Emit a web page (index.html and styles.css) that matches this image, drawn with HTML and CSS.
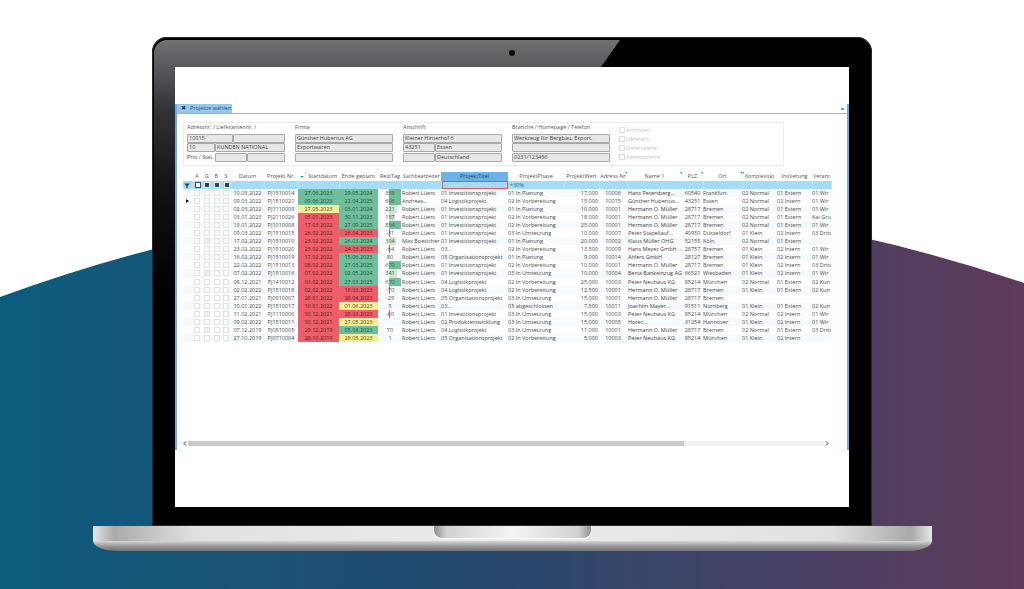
FILE: index.html
```html
<!DOCTYPE html>
<html lang="de">
<head>
    <meta charset="UTF-8">
    <meta name="viewport" content="width=device-width, initial-scale=1.0">
    <title>Projekte wählen</title>
    <link rel="stylesheet" href="styles.css">
</head>
<body>
<div class="stage">
    <svg class="backdrop" width="1024" height="589" viewBox="0 0 1024 589">
        <defs>
            <linearGradient id="wave" x1="0" x2="1" y1="0" y2="0">
                <stop offset="0" stop-color="#0c5c7d"/>
                <stop offset="0.45" stop-color="#24496f"/>
                <stop offset="1" stop-color="#5f3a5c"/>
            </linearGradient>
        </defs>
        <path d="M0 297 Q512 110 1024 283 V589 H0 Z" fill="url(#wave)"/>
    </svg>

    <div class="laptop">
        <div class="bezel">
            <span class="camera"></span>
            <div class="screen">
                <div class="panel">
                    <div class="tabstrip">
                        <div class="tab"><span class="tab-x">✖</span>Projekte wählen</div>
                        <span class="tab-pin"></span>
                    </div>

                    <div class="groupbox">
                        <div class="fieldset w98">
                            <div class="cap">Adressnr. / Lieferantennr. /</div>
                            <div class="line"><div class="f w46">10015</div><div class="f grow"></div></div>
                            <div class="line"><div class="f w28">10</div><div class="f grow">KUNDEN NATIONAL</div></div>
                            <div class="line"><div class="lbl w28">Prio / Stat.</div><div class="f w32"></div><div class="f grow"></div></div>
                        </div>
                        <div class="fieldset w98">
                            <div class="cap">Firma</div>
                            <div class="line"><div class="f grow">Günther Hubertus AG</div></div>
                            <div class="line"><div class="f grow">Exportwaren</div></div>
                            <div class="line"><div class="f grow"></div></div>
                        </div>
                        <div class="fieldset w99">
                            <div class="cap">Anschrift</div>
                            <div class="line"><div class="f grow">Kleiner Hinterhof 6</div></div>
                            <div class="line"><div class="f w32">43251</div><div class="f grow">Essen</div></div>
                            <div class="line"><div class="f w32"></div><div class="f grow">Deutschland</div></div>
                        </div>
                        <div class="fieldset w98">
                            <div class="cap">Branche / Homepage / Telefon</div>
                            <div class="line"><div class="f grow">Werkzeug für Bergbau, Export,</div></div>
                            <div class="line"><div class="f grow"></div></div>
                            <div class="line"><div class="f grow">0231/123456</div></div>
                        </div>
                        <div class="flags">
                            <div class="flag"><span class="box"></span>Archiviert</div>
                            <div class="flag"><span class="box"></span>Lieferant</div>
                            <div class="flag"><span class="box"></span>Liefersperre</div>
                            <div class="flag"><span class="box"></span>Adresssperre</div>
                        </div>
                    </div>

                    <div class="gridwrap">
                        <table class="grid">
                            <colgroup>
                                <col class="c-mark"><col class="c-cb"><col class="c-cb"><col class="c-cb"><col class="c-cb">
                                <col class="c-date"><col class="c-nr"><col class="c-start"><col class="c-end"><col class="c-rest">
                                <col class="c-user"><col class="c-title"><col class="c-phase"><col class="c-value"><col class="c-addr">
                                <col class="c-name"><col class="c-plz"><col class="c-city"><col class="c-kompl"><col class="c-init"><col class="c-ver">
                            </colgroup>
                            <thead>
                                <tr>
                                    <th></th><th>A</th><th>G</th><th>B</th><th>S</th>
                                    <th>Datum</th><th>Projekt-Nr.</th><th><span class="sort"></span><sup>1</sup> Startdatum</th><th>Ende geplant</th><th>RestTag</th>
                                    <th class="tight">Sachbearbeiter</th><th class="active">ProjektTitel</th><th>ProjektPhase</th><th>ProjektWert</th><th class="tick">Adress-Nr</th>
                                    <th class="tick">Name 1</th><th class="tick">PLZ</th><th class="tick">Ort</th><th class="tick-left tight">Komplexität</th><th>Initiierung</th><th>Verant</th>
                                </tr>
                                <tr class="filter">
                                    <td class="funnel">
                                        <svg width="6" height="6" viewBox="0 0 6 6"><path d="M0 .5H6L3.7 3V5.6L2.3 4.8V3Z" fill="#234a66"/></svg>
                                    </td>
                                    <td class="c white"></td><td class="c dark"></td><td class="c dark"></td><td class="c dark"></td>
                                    <td></td><td></td><td></td><td></td><td></td><td></td>
                                    <td class="search"></td><td class="pct">+30%</td>
                                    <td></td><td></td><td></td><td></td><td></td><td></td><td></td><td></td>
                                </tr>
                            </thead>
                            <tbody>
                                <tr><td></td><td class="c"></td><td class="c"></td><td class="c"></td><td class="c"></td><td>10.03.2022</td><td>PJ1510014</td><td class="g">27.06.2023</td><td class="g">29.05.2024</td><td class="rest"><i class="hi" style="width:12px"></i><span>368</span></td><td class="l">Robert Lüers</td><td class="l">01 Investitionsprojekt</td><td class="l">01 In Planung</td><td class="r">17.000</td><td>10006</td><td class="l name">Hans Petersberg...</td><td>60540</td><td class="l">Frankfurt</td><td class="l">02 Normal</td><td class="l">01 Extern</td><td class="l">01 Wir</td></tr>
                                <tr><td class="cur"></td><td class="c"></td><td class="c"></td><td class="c"></td><td class="c"></td><td>09.03.2022</td><td>PJ1510021</td><td class="g">09.06.2023</td><td class="g">22.04.2025</td><td class="rest"><i class="hi" style="width:12px"></i><span>696</span></td><td class="l">Andreas...</td><td class="l">04 Logistikprojekt</td><td class="l">02 In Vorbereitung</td><td class="r">15.000</td><td>10015</td><td class="l name">Günther Hubertus...</td><td>43251</td><td class="l">Essen</td><td class="l">02 Normal</td><td class="l">02 Intern</td><td class="l">01 Wir</td></tr>
                                <tr><td></td><td class="c"></td><td class="c"></td><td class="c"></td><td class="c"></td><td>02.03.2022</td><td>PJ1110009</td><td class="y">27.05.2023</td><td class="g">03.01.2024</td><td class="rest"><i style="width:8px"></i><span>221</span></td><td class="l">Robert Lüers</td><td class="l">01 Investitionsprojekt</td><td class="l">01 In Planung</td><td class="r">10.000</td><td>10001</td><td class="l name">Hermann O. Müller</td><td>28717</td><td class="l">Bremen</td><td class="l">02 Normal</td><td class="l">01 Extern</td><td class="l">01 Wir</td></tr>
                                <tr><td></td><td class="c"></td><td class="c"></td><td class="c"></td><td class="c"></td><td>03.01.2023</td><td>PJ2110026</td><td class="x">05.01.2023</td><td class="g">30.11.2023</td><td class="rest"><i style="width:6px"></i><span>187</span></td><td class="l">Robert Lüers</td><td class="l">01 Investitionsprojekt</td><td class="l">02 In Vorbereitung</td><td class="r">18.000</td><td>10001</td><td class="l name">Hermann O. Müller</td><td>28717</td><td class="l">Bremen</td><td class="l">02 Normal</td><td class="l">01 Extern</td><td class="l">Kai Gru</td></tr>
                                <tr><td></td><td class="c"></td><td class="c"></td><td class="c"></td><td class="c"></td><td>13.01.2022</td><td>PJ1010008</td><td class="x">17.03.2022</td><td class="g">27.09.2025</td><td class="rest"><i class="hi" style="width:12px"></i><span>854</span></td><td class="l">Robert Lüers</td><td class="l">01 Investitionsprojekt</td><td class="l">02 In Vorbereitung</td><td class="r">25.000</td><td>10001</td><td class="l name">Hermann O. Müller</td><td>28717</td><td class="l">Bremen</td><td class="l">02 Normal</td><td class="l">01 Extern</td><td class="l">01 Wir</td></tr>
                                <tr><td></td><td class="c"></td><td class="c"></td><td class="c"></td><td class="c"></td><td>09.03.2022</td><td>PJ1510015</td><td class="x">26.02.2022</td><td class="x">26.04.2023</td><td class="rest"><i class="neg" style="width:1px"></i><span>-31</span></td><td class="l">Robert Lüers</td><td class="l">01 Investitionsprojekt</td><td class="l">03 In Umsetzung</td><td class="r">10.000</td><td>10007</td><td class="l name">Peter Stapellauf...</td><td>40950</td><td class="l">Düsseldorf</td><td class="l">01 Klein</td><td class="l">02 Intern</td><td class="l">03 Dritt</td></tr>
                                <tr><td></td><td class="c"></td><td class="c on"></td><td class="c"></td><td class="c"></td><td>17.02.2022</td><td>PJ1510010</td><td class="x">23.02.2022</td><td class="g">26.03.2024</td><td class="rest"><i style="width:7px"></i><span>304</span></td><td class="l">Max Boettcher</td><td class="l">01 Investitionsprojekt</td><td class="l">01 In Planung</td><td class="r">20.000</td><td>10002</td><td class="l name">Klaus Müller OHG</td><td>52155</td><td class="l">Köln</td><td class="l">02 Normal</td><td class="l">01 Extern</td><td class="l"></td></tr>
                                <tr><td></td><td class="c"></td><td class="c"></td><td class="c"></td><td class="c"></td><td>23.02.2022</td><td>PJ1510020</td><td class="x">23.02.2022</td><td class="x">24.03.2023</td><td class="rest"><i class="neg" style="width:1px"></i><span>-64</span></td><td class="l">Robert Lüers</td><td class="l">03...</td><td class="l">02 In Vorbereitung</td><td class="r">13.500</td><td>10009</td><td class="l name">Hans Meyer GmbH ...</td><td>28757</td><td class="l">Bremen</td><td class="l">01 Klein</td><td class="l">02 Intern</td><td class="l">01 Wir</td></tr>
                                <tr><td></td><td class="c"></td><td class="c"></td><td class="c"></td><td class="c"></td><td>16.02.2022</td><td>PJ1510019</td><td class="x">17.02.2022</td><td class="g">15.06.2023</td><td class="rest"><span>80</span></td><td class="l">Robert Lüers</td><td class="l">05 Organisationsprojekt</td><td class="l">01 In Planung</td><td class="r">9.000</td><td>10014</td><td class="l name">Ahlers GmbH</td><td>28127</td><td class="l">Bremen</td><td class="l">01 Klein</td><td class="l">02 Intern</td><td class="l">01 Wir</td></tr>
                                <tr><td></td><td class="c"></td><td class="c"></td><td class="c"></td><td class="c"></td><td>22.02.2022</td><td>PJ1510013</td><td class="x">08.02.2022</td><td class="g">27.03.2025</td><td class="rest"><i class="hi" style="width:12px"></i><span>670</span></td><td class="l">Robert Lüers</td><td class="l">01 Investitionsprojekt</td><td class="l">02 In Vorbereitung</td><td class="r">10.000</td><td>10001</td><td class="l name">Hermann O. Müller</td><td>28717</td><td class="l">Bremen</td><td class="l">01 Klein</td><td class="l">02 Intern</td><td class="l">03 Dritt</td></tr>
                                <tr><td></td><td class="c"></td><td class="c on"></td><td class="c"></td><td class="c"></td><td>07.02.2022</td><td>PJ1510016</td><td class="x">07.02.2022</td><td class="g">02.05.2024</td><td class="rest"><i style="width:8px"></i><span>341</span></td><td class="l">Robert Lüers</td><td class="l">01 Investitionsprojekt</td><td class="l">03 In Umsetzung</td><td class="r">10.000</td><td>10004</td><td class="l name">Berta Bankeinzug AG</td><td>66521</td><td class="l">Wiesbaden</td><td class="l">01 Klein</td><td class="l">02 Intern</td><td class="l">01 Wir</td></tr>
                                <tr><td></td><td class="c"></td><td class="c"></td><td class="c"></td><td class="c"></td><td>08.12.2021</td><td>PJ1410012</td><td class="x">03.02.2022</td><td class="g">27.03.2025</td><td class="rest"><i class="hi" style="width:12px"></i><span>670</span></td><td class="l">Robert Lüers</td><td class="l">04 Logistikprojekt</td><td class="l">02 In Vorbereitung</td><td class="r">25.000</td><td>10003</td><td class="l name">Peter Neuhaus KG</td><td>85214</td><td class="l">München</td><td class="l">02 Normal</td><td class="l">01 Extern</td><td class="l">02 Kun</td></tr>
                                <tr><td></td><td class="c"></td><td class="c"></td><td class="c"></td><td class="c"></td><td>02.02.2022</td><td>PJ1510018</td><td class="x">02.02.2022</td><td class="x">18.03.2023</td><td class="rest"><i class="neg" style="width:1px"></i><span>-70</span></td><td class="l">Robert Lüers</td><td class="l">04 Logistikprojekt</td><td class="l">02 In Vorbereitung</td><td class="r">12.500</td><td>10001</td><td class="l name">Hermann O. Müller</td><td>28717</td><td class="l">Bremen</td><td class="l">01 Klein</td><td class="l">01 Extern</td><td class="l">02 Kun</td></tr>
                                <tr><td></td><td class="c"></td><td class="c"></td><td class="c"></td><td class="c"></td><td>27.01.2021</td><td>PJ0910007</td><td class="x">28.01.2022</td><td class="x">28.04.2023</td><td class="rest"><span>-29</span></td><td class="l">Robert Lüers</td><td class="l">05 Organisationsprojekt</td><td class="l">03 In Umsetzung</td><td class="r">15.000</td><td>10001</td><td class="l name">Hermann O. Müller</td><td>28717</td><td class="l">Bremen</td><td class="l"></td><td class="l"></td><td class="l"></td></tr>
                                <tr><td></td><td class="c"></td><td class="c"></td><td class="c"></td><td class="c"></td><td>10.01.2022</td><td>PJ1510017</td><td class="x">10.01.2022</td><td class="y">01.06.2023</td><td class="rest"><span>5</span></td><td class="l">Robert Lüers</td><td class="l">03...</td><td class="l">05 abgeschlossen</td><td class="r">7.500</td><td>10011</td><td class="l name">Joachim Mayer...</td><td>91511</td><td class="l">Nürnberg</td><td class="l">01 Klein</td><td class="l">01 Extern</td><td class="l">02 Kun</td></tr>
                                <tr><td></td><td class="c"></td><td class="c on"></td><td class="c"></td><td class="c"></td><td>11.02.2021</td><td>PJ1110006</td><td class="x">30.12.2021</td><td class="x">28.03.2023</td><td class="rest"><i class="neg" style="width:1px"></i><span>-60</span></td><td class="l">Robert Lüers</td><td class="l">01 Investitionsprojekt</td><td class="l">03 In Umsetzung</td><td class="r">15.000</td><td>10003</td><td class="l name">Peter Neuhaus KG</td><td>85214</td><td class="l">München</td><td class="l">02 Normal</td><td class="l">02 Intern</td><td class="l">01 Wir</td></tr>
                                <tr><td></td><td class="c"></td><td class="c"></td><td class="c"></td><td class="c"></td><td>09.02.2022</td><td>PJ1510011</td><td class="x">30.12.2021</td><td class="y">27.05.2023</td><td class="rest"></td><td class="l">Robert Lüers</td><td class="l">02 Produktentwicklung</td><td class="l">03 In Umsetzung</td><td class="r">15.000</td><td>10005</td><td class="l name">Hotec...</td><td>31254</td><td class="l">Hannover</td><td class="l">01 Klein</td><td class="l">02 Intern</td><td class="l">01 Wir</td></tr>
                                <tr><td></td><td class="c"></td><td class="c on"></td><td class="c"></td><td class="c"></td><td>07.12.2019</td><td>PJ0810005</td><td class="x">29.12.2019</td><td class="g">05.08.2023</td><td class="rest"><span>70</span></td><td class="l">Robert Lüers</td><td class="l">04 Logistikprojekt</td><td class="l">03 In Umsetzung</td><td class="r">11.000</td><td>10001</td><td class="l name">Hermann O. Müller</td><td>28717</td><td class="l">Bremen</td><td class="l">02 Normal</td><td class="l">01 Extern</td><td class="l">03 Dritt</td></tr>
                                <tr><td></td><td class="c"></td><td class="c"></td><td class="c"></td><td class="c"></td><td>27.10.2019</td><td>PJ0710004</td><td class="x">28.10.2019</td><td class="y">28.05.2023</td><td class="rest"><span>1</span></td><td class="l">Robert Lüers</td><td class="l">05 Organisationsprojekt</td><td class="l">02 In Vorbereitung</td><td class="r">5.000</td><td>10003</td><td class="l name">Peter Neuhaus KG</td><td>85214</td><td class="l">München</td><td class="l">01 Klein</td><td class="l">02 Intern</td><td class="l"></td></tr>
                            </tbody>
                        </table>
                    </div>

                    <div class="scrollbar">
                        <svg width="4" height="5" viewBox="0 0 4 5"><path d="M3 .5L1 2.5L3 4.5" fill="none" stroke="#333"/></svg>
                        <div class="track"><div class="thumb"></div></div>
                        <svg width="4" height="5" viewBox="0 0 4 5"><path d="M1 .5L3 2.5L1 4.5" fill="none" stroke="#333"/></svg>
                    </div>
                </div>
            </div>
        </div>
        <div class="base"><div class="notch"></div></div>
    </div>
</div>
</body>
</html>
```

FILE: styles.css
```css
body {
    margin: 0;
    background-color: #ffffff;
    font-family: "Open Sans", "Noto Sans", sans-serif;
    color: #444444;
}
.stage {
    position: relative;
    width: 1024px;
    height: 589px;
    overflow: hidden;
}
.backdrop {
    position: absolute;
    left: 0;
    top: 0;
}

/* laptop */
.laptop {
    position: relative;
    display: flex;
    flex-direction: column;
    align-items: center;
    padding-top: 37px;
}
.bezel {
    position: relative;
    box-sizing: border-box;
    width: 720px;
    height: 489px;
    padding: 30px 23px 19px;
    background-color: #000000;
    border-radius: 15px 15px 0 0;
    box-shadow: inset 0 0 0 1px #2a2a2a;
}
.bezel::before {
    content: "";
    position: absolute;
    left: 2px;
    top: 3px;
    width: 466px;
    height: 484px;
    border-radius: 13px 0 0 0;
    background: linear-gradient(to bottom, #737174, #59575b 28px, #333235 70px, #121212 150px, #000000 260px);
    clip-path: polygon(0 0, 100% 0, 447px 27px, 21px 27px, 21px 100%, 0 100%);
}
.camera {
    position: absolute;
    left: 357px;
    top: 13px;
    width: 6px;
    height: 6px;
    border-radius: 50%;
    background-color: #080808;
}
.screen {
    position: relative;
    box-sizing: border-box;
    height: 440px;
    padding-top: 37px;
    background-color: #ffffff;
}
.base {
    position: relative;
    display: flex;
    justify-content: center;
    width: 839px;
    height: 25px;
    border-radius: 0 0 24px 24px / 0 0 10px 10px;
    background:
        linear-gradient(to bottom, transparent 15px, #d6d6d6 15px, #9a9a9a 20px, #747474 25px),
        linear-gradient(to right, #e6e6e6, #a9a9a9 2.5%, #b9b9b9 5%, #dfe1e0 12%, #e9e9e9 40%, #e9e9e9 60%, #dfe1e0 88%, #b9b9b9 95%, #a9a9a9 97.5%, #e6e6e6);
}
.notch {
    width: 157px;
    height: 12px;
    border-radius: 0 0 8px 8px;
    background: linear-gradient(to right, #8f8f8f, #d2d2d2 8%, #f4f4f4 50%, #d2d2d2 92%, #8f8f8f);
    box-shadow: 0 1px 0 #ffffff;
}

/* window */
.panel {
    box-sizing: border-box;
    display: flex;
    flex-direction: column;
    height: 346px;
    border-left: 2px solid #6fabe3;
    border-right: 2px solid #6fabe3;
    font-size: 5.5px;
}
.tabstrip {
    position: relative;
    height: 9px;
    border-bottom: 1px solid #7ebbec;
    flex-shrink: 0;
}
.tab {
    width: 55px;
    height: 9px;
    line-height: 9px;
    background-color: #94c8f0;
    color: #33506a;
    white-space: nowrap;
}
.tab-x {
    margin: 0 4px 0 4px;
    font-size: 6px;
    color: #1d3c58;
}
.tab-pin {
    position: absolute;
    right: 3px;
    top: 4px;
    width: 3px;
    height: 2px;
    background-color: #5aa2dc;
}

/* address box */
.groupbox {
    box-sizing: border-box;
    display: flex;
    gap: 10px;
    width: 601px;
    height: 44px;
    margin: 8px 0 0 6px;
    padding: 1px 3px;
    border: 1px solid #ececec;
    flex-shrink: 0;
}
.fieldset {
    display: flex;
    flex-direction: column;
    gap: 0.5px;
}
.w98 { width: 98px; }
.w99 { width: 99px; }
.cap {
    height: 9px;
    line-height: 7px;
    color: #555555;
}
.line {
    display: flex;
    height: 9px;
}
.f {
    box-sizing: border-box;
    height: 9px;
    line-height: 7px;
    padding-left: 1px;
    background-color: #e7e7e7;
    border: 1px solid #a8a8a8;
    border-radius: 1px;
    white-space: nowrap;
    overflow: hidden;
}
.lbl {
    line-height: 9px;
    white-space: nowrap;
}
.grow { flex: 1; }
.w28 { width: 28px; }
.w32 { width: 32px; }
.w46 { width: 46px; }
.flags {
    display: flex;
    flex-direction: column;
    padding-top: 1px;
    margin-left: -1px;
    color: #c2c2c2;
}
.flag {
    display: flex;
    align-items: center;
    gap: 1px;
    height: 9.1px;
}
.box {
    box-sizing: border-box;
    width: 6px;
    height: 6px;
    border: 1px solid #dcdcdc;
}

/* grid */
.gridwrap {
    flex: 1;
    margin: 6px 0 0 6px;
    overflow: hidden;
}
.grid {
    width: 648px;
    table-layout: fixed;
    border-collapse: collapse;
}
.c-mark { width: 9px; }
.c-cb { width: 9.75px; }
.c-date { width: 33px; }
.c-nr { width: 34px; }
.c-start { width: 41px; }
.c-end { width: 39px; }
.c-rest { width: 24px; }
.c-user { width: 39px; }
.c-title { width: 67px; }
.c-phase { width: 56px; }
.c-value { width: 35px; }
.c-addr { width: 28px; }
.c-name { width: 55px; }
.c-plz { width: 21px; }
.c-city { width: 39px; }
.c-kompl { width: 35px; }
.c-init { width: 35px; }
.c-ver { width: 19px; }
.grid th, .grid td {
    padding: 0;
    text-align: center;
    white-space: nowrap;
    overflow: hidden;
}
.grid th {
    position: relative;
    height: 9px;
    line-height: 9px;
    font-weight: 400;
    color: #555555;
}
.grid th.tight {
    font-size: 5.2px;
}
.grid th.active {
    background-color: #6db1e6;
    color: #23425e;
}
.tick::after, .tick-left::after {
    content: "";
    position: absolute;
    top: 0;
    right: 0;
    border-top: 2px solid #1fa3bd;
    border-left: 2px solid transparent;
}
.tick-left::after {
    right: auto;
    left: 0;
}
.sort {
    display: inline-block;
    margin-right: 1px;
    vertical-align: middle;
    border-top: 2.5px solid #1fa3bd;
    border-left: 2px solid transparent;
    border-right: 2px solid transparent;
}
.grid sup {
    font-size: 3.5px;
    line-height: 0;
}
.grid .filter td {
    height: 8px;
    line-height: 8px;
    background-color: #a6dcf3;
    border-right: 1px solid #bde5f6;
    box-sizing: border-box;
}
.grid .filter .search {
    border-right: none;
    background-color: #a6dcf3;
    box-shadow: inset 0 0 0 1px #dd5561;
}
.grid .filter .pct {
    text-align: left;
    padding-left: 2px;
    color: #2f5d63;
}
.funnel {
    background-color: #8fc4e0;
}
.funnel svg {
    display: block;
    margin: 1px auto 0;
}
.grid tbody tr {
    height: 8.05px;
}
.grid tbody td {
    height: 8.05px;
    line-height: 8px;
    color: #4c4c4c;
}
.grid tbody tr:nth-child(odd) {
    background-color: #f5fafc;
}
.grid td.l {
    text-align: left;
}
.grid td.r {
    text-align: right;
    padding-right: 1px;
}
.grid td.name {
    color: #4a3a44;
    padding-left: 1px;
}
.grid td.g {
    background-color: #6fbf9d;
    color: #1f4a38;
}
.grid td.y {
    background-color: #f8ee95;
    color: #4e4a1f;
}
.grid td.x {
    background-color: #ee5e69;
    color: #5c1a20;
}
.grid td.c {
    position: relative;
}
.grid td.c::after {
    content: "";
    position: absolute;
    left: 2px;
    top: 1px;
    box-sizing: border-box;
    width: 6px;
    height: 6px;
    border: 1px solid #e2e2e2;
    background-color: #ffffff;
}
.grid td.on::after {
    background-color: #ececec;
}
.grid td.white::after {
    background-color: #ffffff;
    border-color: #3c4c58;
}
.grid td.dark::after {
    background-color: #3a3f44;
    border: 1.5px solid #e9eef0;
}
.grid td.cur {
    position: relative;
}
.grid td.cur::after {
    content: "";
    position: absolute;
    left: 3px;
    top: 1.5px;
    border-left: 3px solid #111111;
    border-top: 2.5px solid transparent;
    border-bottom: 2.5px solid transparent;
}
.grid td.rest {
    position: relative;
}
.rest i {
    position: absolute;
    left: 11px;
    top: 0;
    bottom: 0;
    background-color: #cfe8cd;
}
.rest i.hi {
    background-color: #6fbf9d;
}
.rest i.neg {
    background-color: #e2626b;
}
.rest span {
    position: relative;
}

/* scrollbar */
.scrollbar {
    display: flex;
    align-items: center;
    gap: 1px;
    height: 5px;
    margin: 0 18px 4px 6px;
    flex-shrink: 0;
}
.track {
    flex: 1;
    height: 5px;
    background-color: #f1f1f1;
}
.thumb {
    width: 78%;
    height: 5px;
    background-color: #c9c9c9;
}
```
